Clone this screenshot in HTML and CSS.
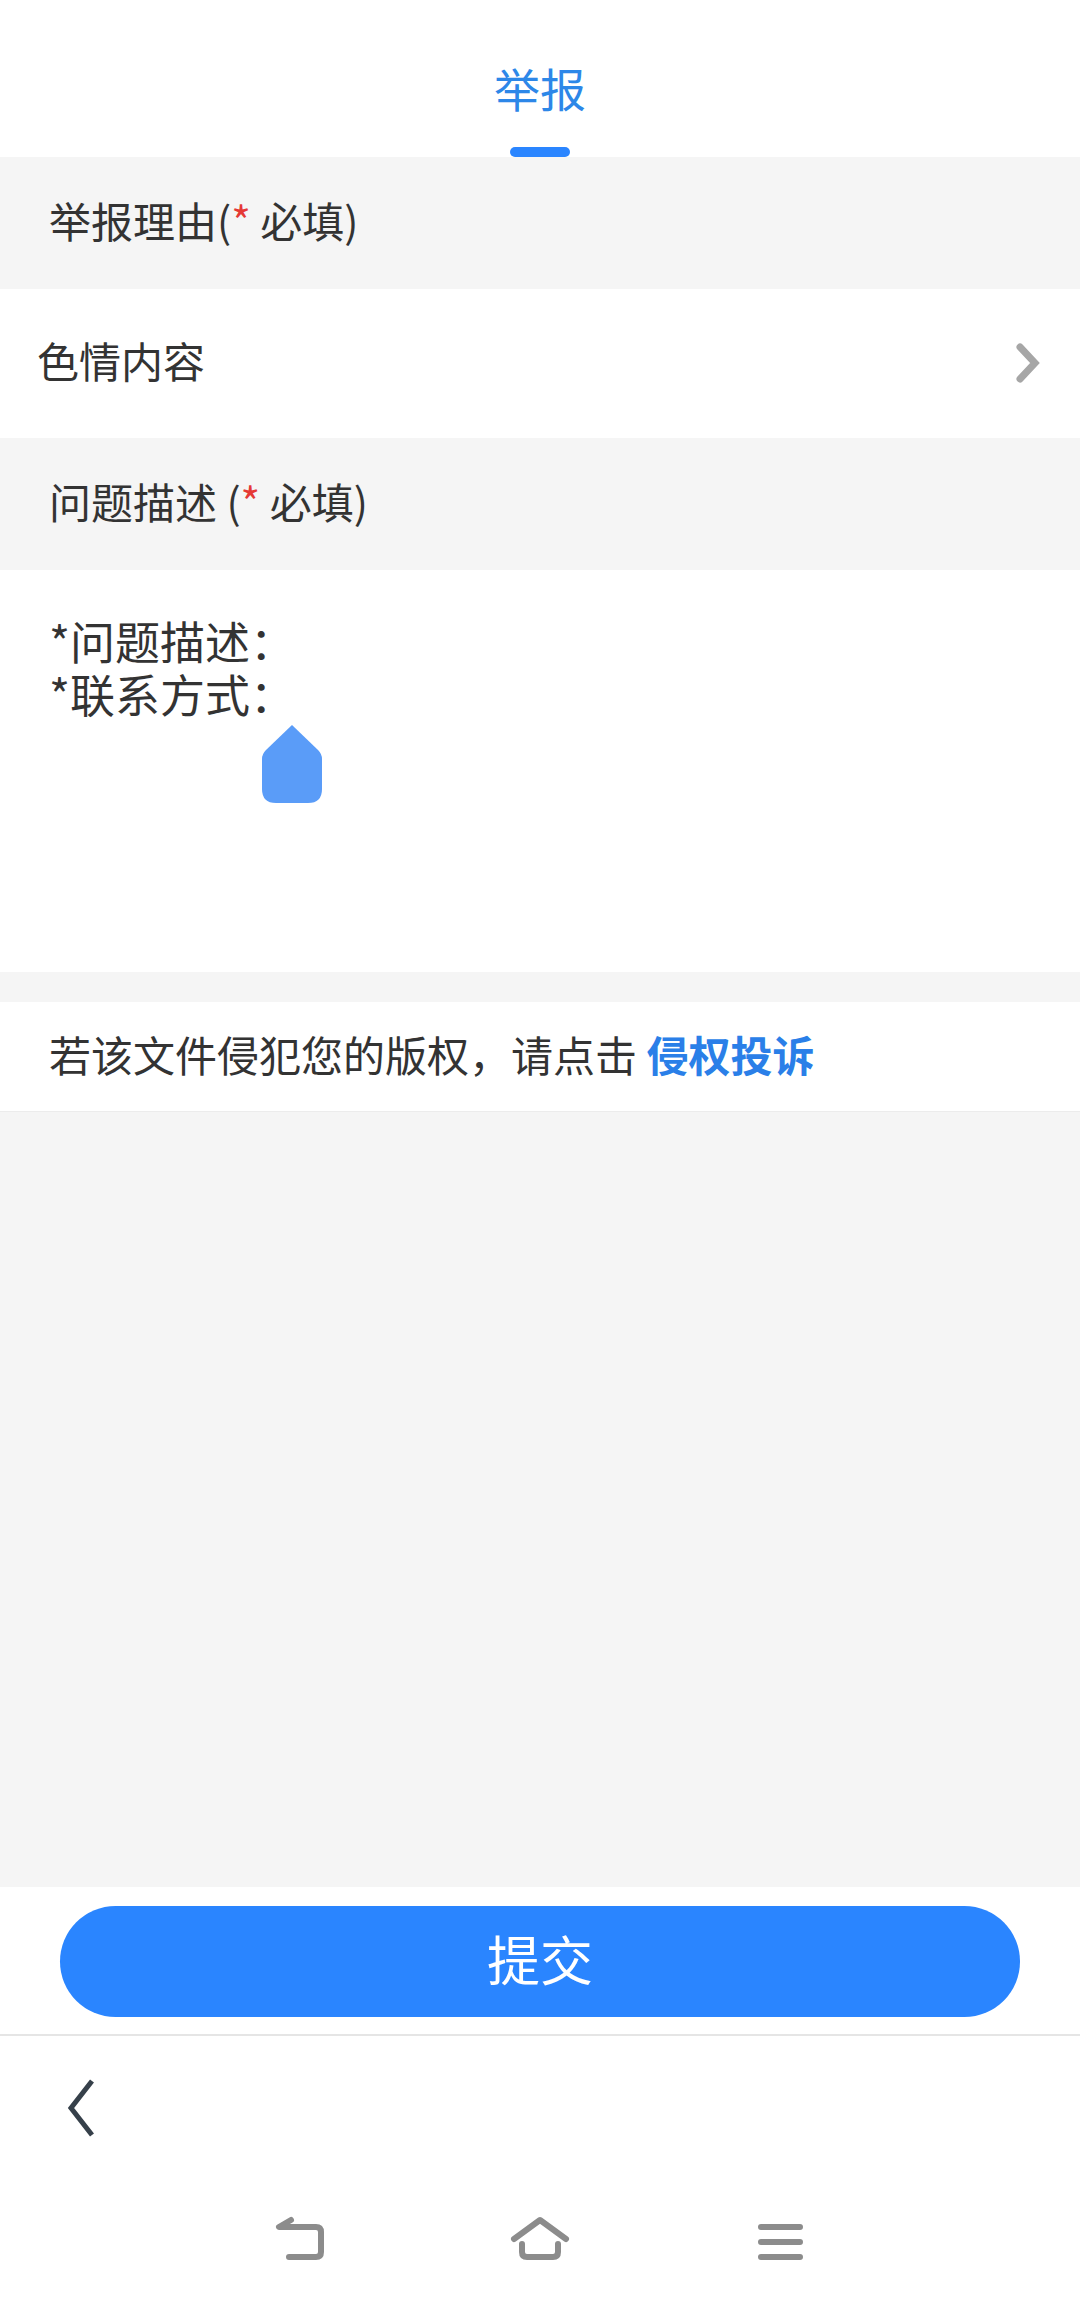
FILE: index.html
```html
<!DOCTYPE html>
<html>
  <head>
    <title>举报</title>
    <link rel="stylesheet" href="styles.css">
  </head>

<body>
  <div class="head">
    <p class="head-t">举报</p>
    <div class="head-line"></div>
  </div>

  <p class="label">举报理由(<span class="star">*</span> 必填)</p>

  <div class="reason">
    <span>色情内容</span>
    <svg class="reason-arrow" width="24" height="40" viewBox="0 0 24 40">
      <path d="M4 4 L19 20 L4 36" fill="none" stroke="#a6a6a6" stroke-width="7" stroke-linecap="round" stroke-linejoin="miter"/>
    </svg>
  </div>

  <p class="label">问题描述 (<span class="star">*</span> 必填)</p>

  <div class="desc">
    <p class="desc-t">*问题描述：</p>
    <p class="desc-t">*联系方式：</p>
    <svg class="handle" width="60" height="78" viewBox="0 0 60 78">
      <path d="M30 0 L56 25 Q60 29 60 34 V64 Q60 78 46 78 H14 Q0 78 0 64 V34 Q0 29 4 25 Z" fill="#5a9cf8"/>
    </svg>
  </div>

  <div class="gap"></div>

  <p class="copyright">若该文件侵犯您的版权，请点击 <a class="copyright-link">侵权投诉</a></p>

  <div class="empty"></div>

  <div class="submit-bar">
    <button class="submit-button">提交</button>
  </div>

  <div class="toolbar">
    <svg width="30" height="58" viewBox="0 0 30 58">
      <path d="M26 2 L5 29 L26 56" fill="none" stroke="#36404a" stroke-width="5"/>
    </svg>
  </div>

  <div class="nav">
    <div class="nav-item">
      <svg width="60" height="50" viewBox="0 0 60 50">
        <path d="M21 6 L9 13 H46 Q51 13 51 18 V38 Q51 43 46 43 H19" fill="none" stroke="#8c8c8c" stroke-width="6" stroke-linecap="round" stroke-linejoin="round"/>
      </svg>
    </div>
    <div class="nav-item">
      <svg width="60" height="50" viewBox="0 0 60 50">
        <path d="M4 25 L30 6 L56 25 M12 30 V38 Q12 43 17 43 H43 Q48 43 48 38 V30" fill="none" stroke="#8c8c8c" stroke-width="6" stroke-linecap="round" stroke-linejoin="round"/>
      </svg>
    </div>
    <div class="nav-item">
      <svg width="60" height="50" viewBox="0 0 60 50">
        <path d="M11 13 H50 M11 28 H50 M11 43 H50" fill="none" stroke="#8c8c8c" stroke-width="6" stroke-linecap="round"/>
      </svg>
    </div>
  </div>
</body>
</html>
```

FILE: styles.css
```css
body {
  margin: 0;
  height: 2305px;
  display: flex;
  flex-direction: column;
  background-color: rgb(255, 255, 255);
  color: rgb(51, 51, 51);
  font-family: "Noto Sans CJK SC", sans-serif;
  font-size: 42px;
}

p {
  margin: 0;
}

.head {
  height: 157px;
  display: flex;
  flex-direction: column;
  align-items: center;
  justify-content: space-between;
  box-sizing: border-box;
  padding-top: 53px;
}

.head-t {
  font-size: 46px;
  line-height: 68px;
  color: rgb(45, 135, 232);
}

.head-line {
  width: 60px;
  height: 10px;
  border-radius: 5px;
  background-color: rgb(42, 133, 255);
}

.label {
  height: 132px;
  display: flex;
  align-items: center;
  box-sizing: border-box;
  white-space: pre;
  padding: 0 0 8px 49px;
  background-color: rgb(245, 245, 245);
}

.star {
  color: rgb(229, 57, 53);
}

.reason {
  height: 149px;
  display: flex;
  align-items: center;
  justify-content: space-between;
  box-sizing: border-box;
  padding: 0 40px 0 37px;
}

.reason span {
  padding-bottom: 8px;
}

.reason-arrow {
  margin-bottom: 2px;
}

.desc {
  position: relative;
  height: 402px;
  box-sizing: border-box;
  padding: 44px 49px 0 49px;
}

.desc-t {
  font-size: 45px;
  line-height: 53px;
}

.handle {
  position: absolute;
  left: 262px;
  top: 155px;
}

.gap {
  height: 30px;
  background-color: rgb(245, 245, 245);
}

.copyright {
  height: 109px;
  display: flex;
  align-items: center;
  box-sizing: border-box;
  white-space: pre;
  padding: 0 0 6px 49px;
}

.copyright-link {
  color: rgb(42, 127, 232);
  font-weight: bold;
}

.empty {
  flex: 1;
  background-color: rgb(245, 245, 245);
  border-top: 1px solid rgb(236, 236, 236);
}

.submit-bar {
  height: 149px;
  box-sizing: border-box;
  padding: 19px 60px 0 60px;
  border-bottom: 2px solid rgb(229, 229, 229);
}

.submit-button {
  display: block;
  width: 100%;
  height: 111px;
  border: none;
  border-radius: 56px;
  padding: 0 0 8px 0;
  background-color: rgb(42, 133, 255);
  color: rgb(255, 255, 255);
  font-family: "Noto Sans CJK SC", sans-serif;
  font-size: 53px;
}

.toolbar {
  height: 178px;
  box-sizing: border-box;
  padding: 43px 0 0 66px;
}

.nav {
  height: 91px;
  display: flex;
  justify-content: center;
}

.nav-item {
  width: 240px;
  display: flex;
  justify-content: center;
}
```
